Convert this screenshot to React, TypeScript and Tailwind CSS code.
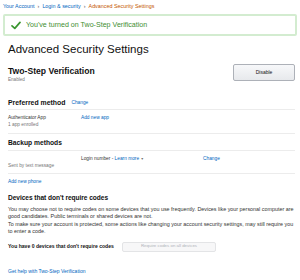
import React from "react";

const Link = ({ children, className = "" }: { children: React.ReactNode; className?: string }) => (
  <span className={"text-[#0066c0] " + className}>{children}</span>
);

export default function App() {
  return (
    <div className="w-[300px] h-[280px] overflow-hidden bg-white text-[#111] font-['Liberation_Sans',Arial,sans-serif]">
      {/* breadcrumb */}
      <div className="h-[12px] flex items-center pl-[3px] text-[5.4px] leading-[6px] whitespace-nowrap">
        <Link>Your Account</Link>
        <span className="text-[#555] px-[3px]">›</span>
        <Link>Login &amp; security</Link>
        <span className="text-[#555] px-[3px]">›</span>
        <span className="text-[#c45500]">Advanced Security Settings</span>
      </div>

      {/* success banner */}
      <div className="mx-[3px] mt-[2px] h-[22px] border-2 border-[#d3ecd0] rounded-[2px] flex items-center pl-[6px] gap-[5px]">
        <svg width="10" height="9" viewBox="0 0 10 9" className="shrink-0">
          <polyline points="1,4.8 3.8,7.4 9,1.4" fill="none" stroke="#3a9630" strokeWidth="1.7" strokeLinecap="round" strokeLinejoin="round" />
        </svg>
        <span className="text-[7.1px] leading-[9px] text-[#3e8e31] whitespace-nowrap">You've turned on Two-Step Verification</span>
      </div>

      {/* title */}
      <div className="mt-[2px] h-[21px] flex items-center pl-[8px]">
        <h1 className="text-[11.5px] leading-[14px] text-[#111] whitespace-nowrap">Advanced Security Settings</h1>
      </div>

      <div className="pl-[8px] pr-[5px]">
        {/* two-step */}
        <div className="mt-[5px] flex justify-between items-start">
          <div className="pt-[1px]">
            <div className="text-[8.6px] leading-[12px] font-bold whitespace-nowrap">Two-Step Verification</div>
            <div className="text-[4.6px] leading-[6px] text-[#767676]">Enabled</div>
          </div>
          <div className="w-[62px] h-[17px] rounded-[2px] border border-[#adb1b8] bg-gradient-to-b from-[#f7f8fa] to-[#e7e9ec] flex items-center justify-center text-[5px] text-[#111]">
            Disable
          </div>
        </div>

        {/* preferred method */}
        <div className="mt-[15px] h-[10px] flex items-center gap-[6px] whitespace-nowrap">
          <span className="text-[6.9px] font-bold">Preferred method</span>
          <Link className="text-[4.8px]">Change</Link>
        </div>
        <div className="mt-[1px] h-px bg-[#ececec]" />
        <div className="h-[23px] pt-[4px] grid grid-cols-[73px_122px_1fr] text-[4.8px] leading-[7px] whitespace-nowrap">
          <div>
            <div className="text-[#333]">Authenticator App</div>
            <div className="text-[#767676]">1 app enrolled</div>
          </div>
          <Link>Add new app</Link>
          <div />
        </div>
        <div className="h-px bg-[#ececec]" />

        {/* backup methods */}
        <div className="mt-[4px] h-[10px] flex items-center whitespace-nowrap">
          <span className="text-[6.7px] font-bold">Backup methods</span>
        </div>
        <div className="mt-[2px] h-px bg-[#ececec]" />
        <div className="h-[22px] pt-[4px] grid grid-cols-[73px_122px_1fr] text-[4.8px] leading-[7px] whitespace-nowrap">
          <div>
            <div className="h-[7px]" />
            <div className="text-[#767676]">Sent by text message</div>
          </div>
          <div className="text-[#333]">
            Login number - <Link>Learn more</Link> <span className="text-[#767676] text-[3.5px]">▼</span>
          </div>
          <Link>Change</Link>
        </div>
        <div className="h-px bg-[#ececec]" />

        <div className="mt-[4px] h-[8px] flex items-center text-[4.8px]">
          <Link>Add new phone</Link>
        </div>

        {/* devices */}
        <div className="mt-[7px] h-[10px] flex items-center whitespace-nowrap">
          <span className="text-[6.6px] font-bold tracking-[-0.05px]">Devices that don't require codes</span>
        </div>
        <div className="mt-[3px] text-[5.4px] leading-[7.4px] text-[#333] whitespace-nowrap">
          You may choose not to require codes on some devices that you use frequently. Devices like your personal computer are
          <br />
          good candidates. Public terminals or shared devices are not.
          <br />
          To make sure your account is protected, some actions like changing your account security settings, may still require you
          <br />
          to enter a code.
        </div>

        <div className="mt-[6px] h-[10px] flex items-center whitespace-nowrap">
          <span className="text-[5.1px] font-bold w-[114px]">You have 0 devices that don't require codes</span>
          <div className="w-[94px] h-[10px] rounded-[2px] border border-[#e3e4e6] bg-[#f7f7f8] flex items-center justify-center text-[4.4px] text-[#b0b3b8]">
            Require codes on all devices
          </div>
        </div>

        <div className="mt-[16px] h-[8px] flex items-center text-[5px] whitespace-nowrap">
          <Link>Get help with Two-Step Verification</Link>
        </div>
      </div>
    </div>
  );
}
